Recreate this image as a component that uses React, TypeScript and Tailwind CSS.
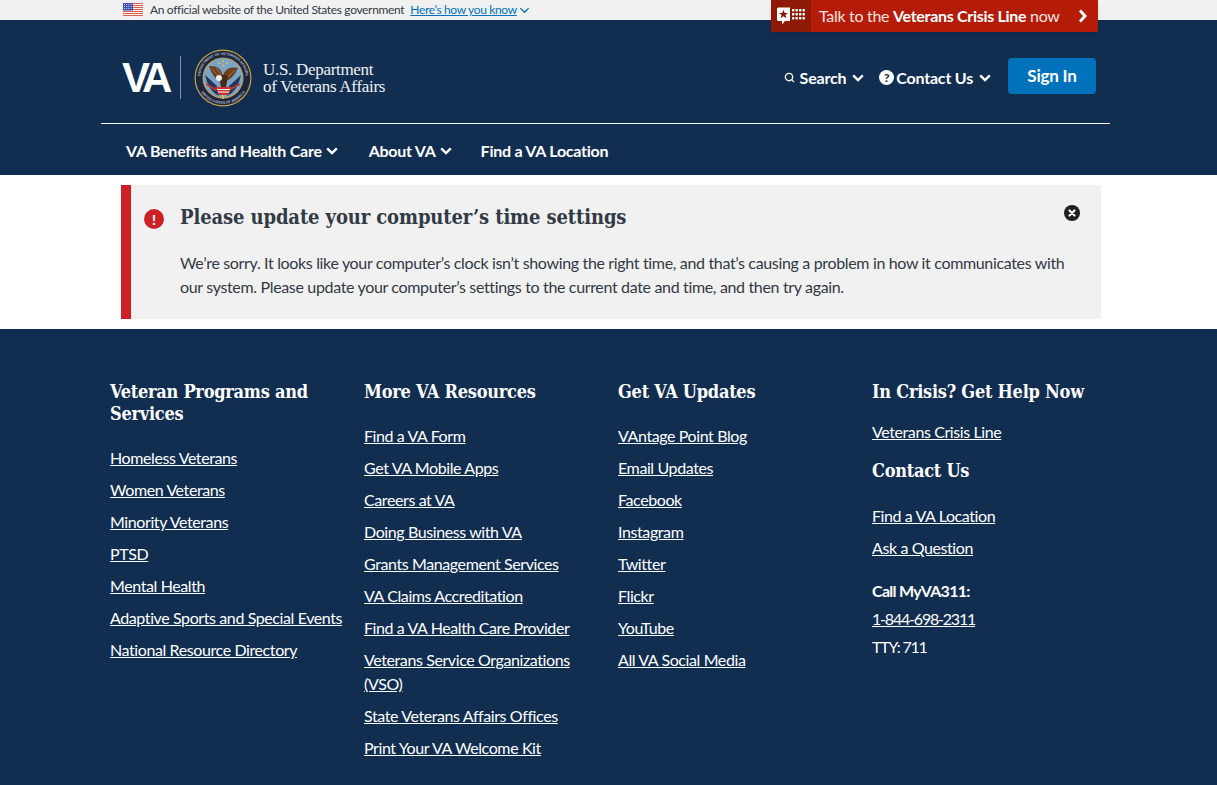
import { Search } from 'lucide-react';

const sans = "font-['Lato','Noto_Sans',sans-serif]";
const serif = "font-['DejaVu_Serif_Condensed','DejaVu_Serif','Liberation_Serif',serif] [font-stretch:condensed]";

type Column = { title: string; links: string[] };

const columns: Column[] = [
  {
    title: 'Veteran Programs and Services',
    links: [
      'Homeless Veterans',
      'Women Veterans',
      'Minority Veterans',
      'PTSD',
      'Mental Health',
      'Adaptive Sports and Special Events',
      'National Resource Directory',
    ],
  },
  {
    title: 'More VA Resources',
    links: [
      'Find a VA Form',
      'Get VA Mobile Apps',
      'Careers at VA',
      'Doing Business with VA',
      'Grants Management Services',
      'VA Claims Accreditation',
      'Find a VA Health Care Provider',
      'Veterans Service Organizations (VSO)',
      'State Veterans Affairs Offices',
      'Print Your VA Welcome Kit',
    ],
  },
  {
    title: 'Get VA Updates',
    links: [
      'VAntage Point Blog',
      'Email Updates',
      'Facebook',
      'Instagram',
      'Twitter',
      'Flickr',
      'YouTube',
      'All VA Social Media',
    ],
  },
];

function Chevron({ className, weight = 2.4 }: { className: string; weight?: number }) {
  return (
    <svg viewBox="0 0 12 8" className={className} fill="none" stroke="currentColor" strokeWidth={weight}>
      <path d="M1.200 1.300 L6 6 L10.800 1.300" />
    </svg>
  );
}

function Flag() {
  return (
    <svg viewBox="0 0 20 14" className="h-[14px] w-[20px]">
      <rect width="20" height="14" fill="#fff" />
      {[0, 2, 4, 6, 8, 10, 12].map((y) => (
        <rect key={y} y={y} width="20" height="1.100" fill="#e2604f" />
      ))}
      <rect width="10" height="7.500" fill="#3d4fb0" />
      {[1.500, 3.500, 5.500].map((y) =>
        [1.500, 3.700, 5.900, 8.100].map((x) => <circle key={`${x}-${y}`} cx={x} cy={y} r="0.500" fill="#fff" />),
      )}
    </svg>
  );
}

function Seal() {
  return (
    <svg viewBox="0 0 58 58" className="h-[58px] w-[58px]">
      <defs>
        <path id="sealTop" d="M9.100 40.500 A23 23 0 1 1 48.900 40.500" />
        <path id="sealBottom" d="M3 29 A26 26 0 0 0 55 29" />
      </defs>
      <circle cx="29" cy="29" r="28.500" fill="#c9a04c" />
      <circle cx="29" cy="29" r="27.300" fill="#1b2740" />
      <text fontSize="3.600" fill="#b9bdc6" fontFamily="Liberation Sans" fontWeight="700">
        <textPath href="#sealTop" startOffset="50%" textAnchor="middle">DEPARTMENT OF VETERANS AFFAIRS</textPath>
      </text>
      <text fontSize="3.600" fill="#b9bdc6" fontFamily="Liberation Sans" fontWeight="700">
        <textPath href="#sealBottom" startOffset="50%" textAnchor="middle">UNITED STATES OF AMERICA</textPath>
      </text>
      <circle cx="29" cy="29" r="20.500" fill="#c9a04c" />
      <circle cx="29" cy="29" r="19.500" fill="#7aa5c4" />
      <path d="M11 26 L23 37 L25 47 Q14 42 11 26Z" fill="#26365f" />
      <path d="M47 26 L35 37 L33 47 Q44 42 47 26Z" fill="#26365f" />
      <path d="M12 35 L22 41 M35 41 L46 35" stroke="#c9372c" strokeWidth="1.500" />
      <path d="M29 33 Q19 31 15 17 Q25 16 28 24 Z" fill="#6e3f1e" />
      <path d="M29 33 Q39 31 44 19 Q34 17 30 24 Z" fill="#6e3f1e" />
      <path d="M18 20 L26 29 M22 19 L28 27 M41 21 L33 29" stroke="#a4703c" strokeWidth="1" />
      <path d="M25 27 Q30 24 34 27 L32 38 L27 38 Z" fill="#4a2a14" />
      <circle cx="25" cy="29" r="3" fill="#f1efe8" />
      <path d="M21 38 L38 38 L34 46 L25 46Z" fill="#c9372c" />
      <path d="M23 40.500 H36 M24 43 H35" stroke="#fff" strokeWidth="1" />
      <path d="M29 46 L29 50" stroke="#e3bf55" strokeWidth="1.500" />
      {[[25, 14], [29, 12], [33, 14], [29, 16.500]].map(([x, y]) => (
        <circle key={`${x}-${y}`} cx={x} cy={y} r="1.100" fill="#e3bf55" />
      ))}
    </svg>
  );
}

function CrisisIcon() {
  return (
    <svg viewBox="0 0 28 18" className="h-[18px] w-[28px]" fill="#fff">
      <path d="M0 2 Q0 0.500 1.500 0.500 H13 V14 H8 L5 17.500 V14 H1.500 Q0 14 0 12.500 Z" />
      <path d="M6.500 2.800 L7.800 6 H11 L8.500 8 L9.400 11.300 L6.500 9.300 L3.600 11.300 L4.500 8 L2 6 H5.200 Z" fill="#8c1a06" />
      {[2, 6, 10].map((y) =>
        [15, 18.500, 22, 25.500].map((x) => <rect key={`${x}-${y}`} x={x} y={y} width="2.400" height="2.400" rx="0.600" />),
      )}
    </svg>
  );
}

function FooterLink({ children }: { children: string }) {
  return <a className="text-[16px] leading-6 tracking-[-0.4px] text-white underline">{children}</a>;
}

export default function App() {
  return (
    <div className={`${sans} min-h-[785px] bg-[#112e51] text-white`}>
      <div className="h-5 bg-[#f1f1f1]">
        <div className="flex h-5 items-center gap-[7px] pl-[123px] text-[12px] tracking-[-0.34px] text-[#323a45]">
          <Flag />
          <span>An official website of the United States government</span>
          <a className="ml-[-1px] flex items-center gap-[2px] text-[#0071bb] underline">
            Here’s how you know
            <Chevron className="h-[7px] w-[11px]" weight={1.500} />
          </a>
        </div>
      </div>

      <div className="relative ml-[101px] mr-[107px]">
        <div className="absolute right-[12px] top-[-20px] flex h-[32px] w-[327px] items-center rounded-b-[2px] bg-[#b51c08] shadow-md">
          <div className="flex h-full w-10 items-center justify-center rounded-bl-[2px] bg-[#8c1a06]">
            <CrisisIcon />
          </div>
          <span className="ml-2 text-[16px] tracking-[-0.3px] text-[#f7e3e0]">
            Talk to the <b className="font-bold text-white">Veterans Crisis Line</b> now
          </span>
          <svg viewBox="0 0 10 14" className="absolute right-[10px] h-[14px] w-[10px]" fill="none" stroke="#fff" strokeWidth="3">
            <path d="M2 1.500 L7 7 L2 12.500" />
          </svg>
        </div>

        <div className="flex h-[104px] items-center justify-between border-b border-white pl-[21px] pr-[14px] pt-[12px]">
          <div className="flex items-center">
            <span className="w-[47px] font-['Liberation_Sans',sans-serif] text-[42px] font-bold leading-none tracking-[-5px]">VA</span>
            <div className="ml-[11px] h-[43px] w-px bg-[#8794a8]" />
            <div className="ml-[13px]">
              <Seal />
            </div>
            <div className="ml-[11px] font-['Liberation_Serif',serif] text-[17px] leading-[17px] tracking-[-0.3px] text-[#eef0f3]">
              U.S. Department
              <br />
              of Veterans Affairs
            </div>
          </div>
          <div className="flex items-center text-[16px] font-bold tracking-[-0.2px]">
            <span className="flex items-center">
              <Search className="mr-[5px] h-[11px] w-[11px]" strokeWidth={3} />
              Search
              <Chevron className="ml-[6px] h-2 w-3" />
            </span>
            <span className="ml-[15px] flex items-center">
              <span className="mr-[2px] flex h-[15px] w-[15px] items-center justify-center rounded-full bg-white text-[12px] font-black text-[#112e51]">?</span>
              Contact Us
              <Chevron className="ml-[6px] h-2 w-3" />
            </span>
            <button className="ml-[17px] mb-[4px] h-9 w-[88px] rounded-[4px] bg-[#0071bb] text-[17px] font-bold">Sign In</button>
          </div>
        </div>

        <nav className="flex h-[51px] items-center pl-[25px] pt-[2px] text-[16px] font-bold tracking-[-0.25px]">
          <span className="flex items-center">
            VA Benefits and Health Care
            <Chevron className="ml-[4px] h-2 w-3" />
          </span>
          <span className="ml-[31px] flex items-center">
            About VA
            <Chevron className="ml-[4px] h-2 w-3" />
          </span>
          <span className="ml-[29px]">Find a VA Location</span>
        </nav>
      </div>

      <main className="bg-white px-[121px] py-[10px]">
        <div className="relative h-[134px] w-[980px] border-l-[10px] border-[#cd2026] bg-[#f1f1f1] pl-[49px] pt-[19px] text-[#323a45]">
          <div className="absolute left-[13px] top-[24px] flex h-5 w-5 items-center justify-center rounded-full bg-[#cd2026] text-[14px] font-black text-white">!</div>
          <h2 className={`${serif} text-[20px] font-bold leading-[26px] tracking-[-0.12px]`}>Please update your computer’s time settings</h2>
          <p className="mt-[21px] w-[900px] text-[16px] leading-6 tracking-[-0.34px]">
            We’re sorry. It looks like your computer’s clock isn’t showing the right time, and that’s causing a problem in how it communicates with our system. Please update your computer’s settings to the current date and time, and then try again.
          </p>
          <div className="absolute right-[21px] top-[20px] flex h-4 w-4 items-center justify-center rounded-full bg-[#212121]">
            <svg viewBox="0 0 10 10" className="h-[10px] w-[10px]">
              <path d="M2.500 2.500 L7.500 7.500 M7.500 2.500 L2.500 7.500" stroke="#fff" strokeWidth="2.200" strokeLinecap="round" />
            </svg>
          </div>
        </div>
      </main>

      <footer className="grid grid-cols-[254px_254px_254px_1fr] pl-[110px] pt-[52px]">
        {columns.map((col) => (
          <div key={col.title} className="pr-[18px]">
            <h2 className={`${serif} text-[18px] font-bold leading-[22px] tracking-[-0.25px]`}>{col.title}</h2>
            <ul className="mt-[21px] flex flex-col gap-2">
              {col.links.map((l) => (
                <li key={l}>
                  <FooterLink>{l}</FooterLink>
                </li>
              ))}
            </ul>
          </div>
        ))}
        <div>
          <h2 className={`${serif} text-[18px] font-bold leading-[22px] tracking-[-0.25px]`}>In Crisis? Get Help Now</h2>
          <div className="mt-[17px]">
            <FooterLink>Veterans Crisis Line</FooterLink>
          </div>
          <h2 className={`${serif} mt-[16px] text-[18px] font-bold leading-[22px] tracking-[-0.25px]`}>Contact Us</h2>
          <ul className="mt-[22px] flex flex-col gap-2">
            <li><FooterLink>Find a VA Location</FooterLink></li>
            <li><FooterLink>Ask a Question</FooterLink></li>
          </ul>
          <p className="mt-[19px] text-[16px] font-bold leading-6 tracking-[-0.7px]">Call MyVA311:</p>
          <p className="mt-1 leading-6 tracking-[-1.2px]">
            <a className="text-[16px] leading-6 text-white underline">1-844-698-2311</a>
          </p>
          <p className="mt-1 text-[16px] leading-6 tracking-[-1.2px]">TTY: 711</p>
        </div>
      </footer>
    </div>
  );
}
